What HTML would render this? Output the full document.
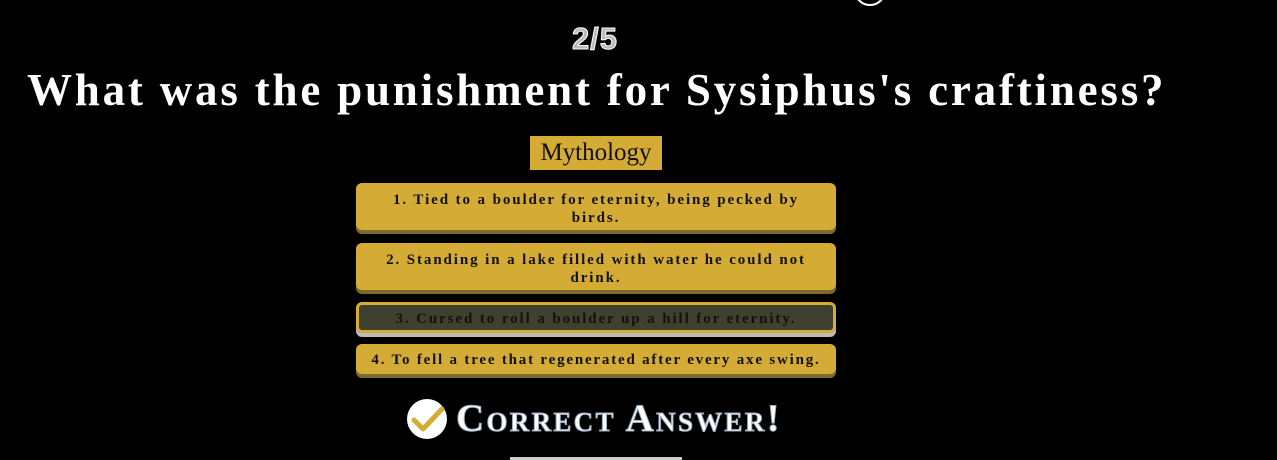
<!DOCTYPE html>
<html><head><style>
body{margin:0;width:1277px;height:460px;background:#000;overflow:hidden;position:relative;font-family:"Liberation Serif",serif}
.abs{position:absolute}
.btn{position:absolute;left:356px;width:480px;background:#d4ac35;border-radius:6px;box-shadow:0 4px 0 #7a6a2c;color:#111;font-weight:bold;font-size:15px;letter-spacing:1.9px;text-align:center;line-height:18px;box-sizing:border-box;padding:8px 20px}
</style></head><body>
<div class="abs" style="left:854px;top:-26px;width:28px;height:28px;border:2px solid #fff;border-radius:50%"></div>
<div class="abs" style="left:0;width:1190px;top:21px;text-align:center;font-family:'Liberation Sans',sans-serif;font-weight:bold;font-size:31px;color:#bbb;-webkit-text-stroke:1px #fff;letter-spacing:1px">2/5</div>
<div class="abs" style="left:27px;top:64px;font-weight:bold;font-size:45px;color:#fff;letter-spacing:2.8px;white-space:nowrap">What was the punishment for Sysiphus's craftiness?</div>
<div class="abs" style="left:530px;top:136px;width:132px;height:34px;background:#d4ac35;font-size:25px;line-height:34px;text-align:center;color:#111">Mythology</div>
<div class="btn" style="top:183px;height:47px">1. Tied to a boulder for eternity, being pecked by birds.</div>
<div class="btn" style="top:243px;height:47px">2. Standing in a lake filled with water he could not drink.</div>
<div class="btn" style="top:302px;height:31px;background:#40402f;border:3px solid #d4ac35;box-shadow:0 4px 0 #bbb;padding:5px 6px;line-height:18px;color:#111">3. Cursed to roll a boulder up a hill for eternity.</div>
<div class="btn" style="top:344px;height:30px;padding:7px 0px;letter-spacing:1.8px">4. To fell a tree that regenerated after every axe swing.</div>
<div class="abs" style="left:407px;top:399px;width:40px;height:40px;border-radius:50%;background:#fff">
<svg width="40" height="40" viewBox="0 0 40 40"><path d="M7 21 L16 30 L35 10" stroke="#d4ac35" stroke-width="5" fill="none" stroke-linecap="round" stroke-linejoin="round"/></svg></div>
<div class="abs" style="left:456px;top:396px;font-family:'Liberation Serif',serif;font-weight:bold;font-size:39px;font-variant:small-caps;color:#fff;letter-spacing:2.3px;-webkit-text-stroke:1px #9ab;white-space:nowrap">Correct Answer!</div>
<div class="abs" style="left:510px;top:457px;width:172px;height:3px;background:#ccc"></div>
</body></html>
